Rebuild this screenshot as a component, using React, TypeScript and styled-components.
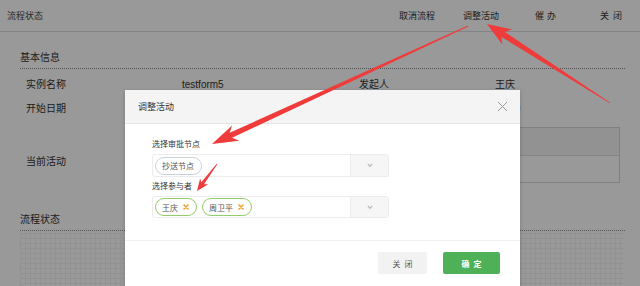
import * as React from 'react';
import styled, { createGlobalStyle } from 'styled-components';

const GlobalStyle = createGlobalStyle`
  html, body {
    margin: 0;
    padding: 0;
    background: #ffffff;
  }
  body {
    font-family: "Liberation Sans", "Noto Sans CJK SC", sans-serif;
    color: #333333;
    width: 640px;
    height: 286px;
    overflow: hidden;
  }
`;

const Page = styled.div`
  position: relative;
  width: 640px;
  height: 286px;
  overflow: hidden;
`;

const TopBar = styled.header`
  display: flex;
  align-items: center;
  justify-content: space-between;
  height: 32px;
  padding: 0 18px 0 7px;
  border-bottom: 1px solid #dcdcdc;
  box-sizing: border-box;
`;

const TopTitle = styled.span`
  font-size: 9px;
  color: #444;
`;

const Links = styled.nav`
  display: flex;
  align-items: center;
`;

const Link = styled.span<{ $gap: number; $spacing?: number }>`
  font-size: 9px;
  color: #333;
  margin-left: ${(p) => p.$gap}px;
  letter-spacing: ${(p) => p.$spacing ?? 0}px;
  margin-right: ${(p) => -(p.$spacing ?? 0)}px;
`;

const Content = styled.main`
  padding: 0 15px 0 20px;
`;

const SectionTitle = styled.div<{ $top: number }>`
  margin-top: ${(p) => p.$top}px;
  font-size: 10px;
  line-height: 14px;
  padding-bottom: 3px;
  border-bottom: 1px dotted #8a8a8a;
`;

const InfoGrid = styled.div`
  display: grid;
  grid-template-columns: 156px 177px 136px 1fr;
  padding-left: 6px;
  margin-top: 4px;
  font-size: 10px;
`;

const Cell = styled.div`
  height: 24px;
  line-height: 24px;
  white-space: nowrap;
`;

const ActivityRow = styled.div`
  display: flex;
  padding-left: 6px;
  margin-top: 6px;
  font-size: 10px;
`;

const ActivityLabel = styled.div`
  width: 156px;
  padding-top: 28px;
  line-height: 14px;
`;

const ActivityTable = styled.div`
  flex: 1;
  height: 56px;
  border: 1px solid #d6d6d6;
  box-sizing: border-box;
  margin-right: 5px;
  display: flex;
  flex-direction: column;
`;

const TableRow = styled.div<{ $shade?: boolean }>`
  flex: 1;
  background: ${(p) => (p.$shade ? '#f4f4f4' : '#ffffff')};
  border-bottom: ${(p) => (p.$shade ? '1px solid #e0e0e0' : 'none')};
`;

const FlowGrid = styled.div`
  height: 70px;
  margin-top: 2px;
  background-color: #ffffff;
  background-image:
    linear-gradient(to right, #f4f4f4 1px, transparent 1px),
    linear-gradient(to bottom, #f4f4f4 1px, transparent 1px);
  background-size: 5px 5px;
`;

const Backdrop = styled.div`
  position: absolute;
  inset: 0;
  background: rgba(0, 0, 0, 0.4);
`;

const Modal = styled.section`
  position: absolute;
  left: 125px;
  top: 90px;
  width: 395px;
  height: 220px;
  background: #ffffff;
  box-shadow: 0 1px 4px rgba(0, 0, 0, 0.2);
`;

const ModalHeader = styled.div`
  display: flex;
  align-items: center;
  justify-content: space-between;
  height: 33px;
  padding: 0 12px 0 13px;
  background: #f4f4f4;
  border-bottom: 1px solid #e4e4e4;
  font-size: 9px;
  color: #333;
`;

const ModalBody = styled.div`
  padding: 15px 0 22px 27px;
  border-bottom: 1px solid #f0f0f0;
`;

const FieldLabel = styled.div<{ $top?: number }>`
  font-size: 8px;
  line-height: 12px;
  margin-top: ${(p) => p.$top ?? 0}px;
  margin-bottom: 3px;
  color: #333;
`;

const Select = styled.div<{ $h: number }>`
  display: flex;
  width: 237px;
  height: ${(p) => p.$h}px;
  border: 1px solid #ececec;
  border-radius: 3px;
  box-sizing: border-box;
  overflow: hidden;
`;

const SelectValue = styled.div`
  flex: 1;
  display: flex;
  align-items: center;
  gap: 5px;
  padding-left: 2px;
`;

const SelectArrow = styled.div`
  width: 37px;
  display: flex;
  align-items: center;
  justify-content: center;
  background: #f6f6f6;
  border-left: 1px solid #ececec;
`;

const Chip = styled.span<{ $green?: boolean }>`
  display: inline-flex;
  align-items: center;
  gap: 5px;
  height: 18px;
  padding: 0 7px 0 6px;
  box-sizing: border-box;
  border: 1px solid ${(p) => (p.$green ? '#93cc6a' : '#c9d2dc')};
  border-radius: 9px;
  font-size: 8px;
  color: #555;
`;

const Footer = styled.div`
  display: flex;
  justify-content: flex-end;
  gap: 16px;
  padding: 11px 20px 0 0;
`;

const Button = styled.button<{ $primary?: boolean; $w: number }>`
  width: ${(p) => p.$w}px;
  height: 22px;
  border: none;
  border-radius: 2px;
  font-family: inherit;
  font-size: 8px;
  letter-spacing: 4px;
  text-indent: 4px;
  background: ${(p) => (p.$primary ? '#4fb157' : '#f2f2f2')};
  color: ${(p) => (p.$primary ? '#ffffff' : '#555')};
  font-weight: ${(p) => (p.$primary ? 700 : 400)};
  padding: 0;
`;

const ArrowLayer = styled.svg`
  position: absolute;
  left: 0;
  top: 0;
  pointer-events: none;
`;

const CloseIcon = () => (
  <svg width="11" height="11" viewBox="0 0 11 11">
    <path d="M1 1L10 10M10 1L1 10" stroke="#9a9a9a" strokeWidth="1" />
  </svg>
);

const ChevronIcon = () => (
  <svg width="6" height="5" viewBox="0 0 6 5">
    <path d="M0.8 0.8L3 3.2L5.2 0.8" stroke="#bbbbbb" strokeWidth="1.2" fill="none" />
    <path d="M1.5 2.5L3 4.2L4.5 2.5" stroke="#cccccc" strokeWidth="0.8" fill="none" />
  </svg>
);

const RemoveIcon = () => (
  <svg width="6" height="6" viewBox="0 0 6 6">
    <path d="M1 1L5 5M5 1L1 5" stroke="#f0a22a" strokeWidth="1.6" strokeLinecap="round" />
  </svg>
);

type Pt = [number, number];

// tapered arrow: thin at the tail, wider at the head
function arrowPoints(tail: Pt, tip: Pt, head: number, headW: number, w0: number, w1: number) {
  const dx = tip[0] - tail[0];
  const dy = tip[1] - tail[1];
  const len = Math.hypot(dx, dy);
  const ux = dx / len;
  const uy = dy / len;
  const nx = -uy;
  const ny = ux;
  const neck: Pt = [tip[0] - ux * head * 0.8, tip[1] - uy * head * 0.8];
  const base: Pt = [tip[0] - ux * head, tip[1] - uy * head];
  const pts: Pt[] = [
    [tail[0] + nx * w0, tail[1] + ny * w0],
    [neck[0] + nx * w1, neck[1] + ny * w1],
    [base[0] + nx * headW, base[1] + ny * headW],
    tip,
    [base[0] - nx * headW, base[1] - ny * headW],
    [neck[0] - nx * w1, neck[1] - ny * w1],
    [tail[0] - nx * w0, tail[1] - ny * w0],
  ];
  return pts.map((p) => `${p[0].toFixed(1)},${p[1].toFixed(1)}`).join(' ');
}

const arrows = [
  { tail: [610, 103] as Pt, tip: [487, 24] as Pt, head: 24, headW: 9, w0: 0.4, w1: 3 },
  { tail: [468, 26] as Pt, tip: [212, 144] as Pt, head: 26, headW: 8.5, w0: 0.4, w1: 2.8 },
  { tail: [217, 164] as Pt, tip: [197, 191] as Pt, head: 12, headW: 5, w0: 0.4, w1: 1.6 },
];

export default function App() {
  return (
    <Page>
      <GlobalStyle />
      <TopBar>
        <TopTitle>流程状态</TopTitle>
        <Links>
          <Link $gap={0}>取消流程</Link>
          <Link $gap={28}>调整活动</Link>
          <Link $gap={36} $spacing={3}>催办</Link>
          <Link $gap={44} $spacing={4}>关闭</Link>
        </Links>
      </TopBar>
      <Content>
        <SectionTitle $top={19}>基本信息</SectionTitle>
        <InfoGrid>
          <Cell>实例名称</Cell>
          <Cell>testform5</Cell>
          <Cell>发起人</Cell>
          <Cell>王庆</Cell>
          <Cell>开始日期</Cell>
          <Cell>2017-12-25 10:48</Cell>
          <Cell>耗时</Cell>
          <Cell>1分钟</Cell>
        </InfoGrid>
        <ActivityRow>
          <ActivityLabel>当前活动</ActivityLabel>
          <ActivityTable>
            <TableRow $shade />
            <TableRow />
          </ActivityTable>
        </ActivityRow>
        <SectionTitle $top={30}>流程状态</SectionTitle>
        <FlowGrid />
      </Content>
      <Backdrop />
      <Modal>
        <ModalHeader>
          <span>调整活动</span>
          <CloseIcon />
        </ModalHeader>
        <ModalBody>
          <FieldLabel>选择审批节点</FieldLabel>
          <Select $h={23}>
            <SelectValue>
              <Chip>抄送节点</Chip>
            </SelectValue>
            <SelectArrow>
              <ChevronIcon />
            </SelectArrow>
          </Select>
          <FieldLabel $top={4}>选择参与者</FieldLabel>
          <Select $h={22}>
            <SelectValue>
              <Chip $green>
                王庆
                <RemoveIcon />
              </Chip>
              <Chip $green>
                周卫平
                <RemoveIcon />
              </Chip>
            </SelectValue>
            <SelectArrow>
              <ChevronIcon />
            </SelectArrow>
          </Select>
        </ModalBody>
        <Footer>
          <Button $w={49}>关闭</Button>
          <Button $w={57} $primary>确定</Button>
        </Footer>
      </Modal>
      <ArrowLayer width="640" height="286" viewBox="0 0 640 286">
        {arrows.map((a, i) => (
          <polygon
            key={i}
            points={arrowPoints(a.tail, a.tip, a.head, a.headW, a.w0, a.w1)}
            fill="#f03b3b"
          />
        ))}
      </ArrowLayer>
    </Page>
  );
}
